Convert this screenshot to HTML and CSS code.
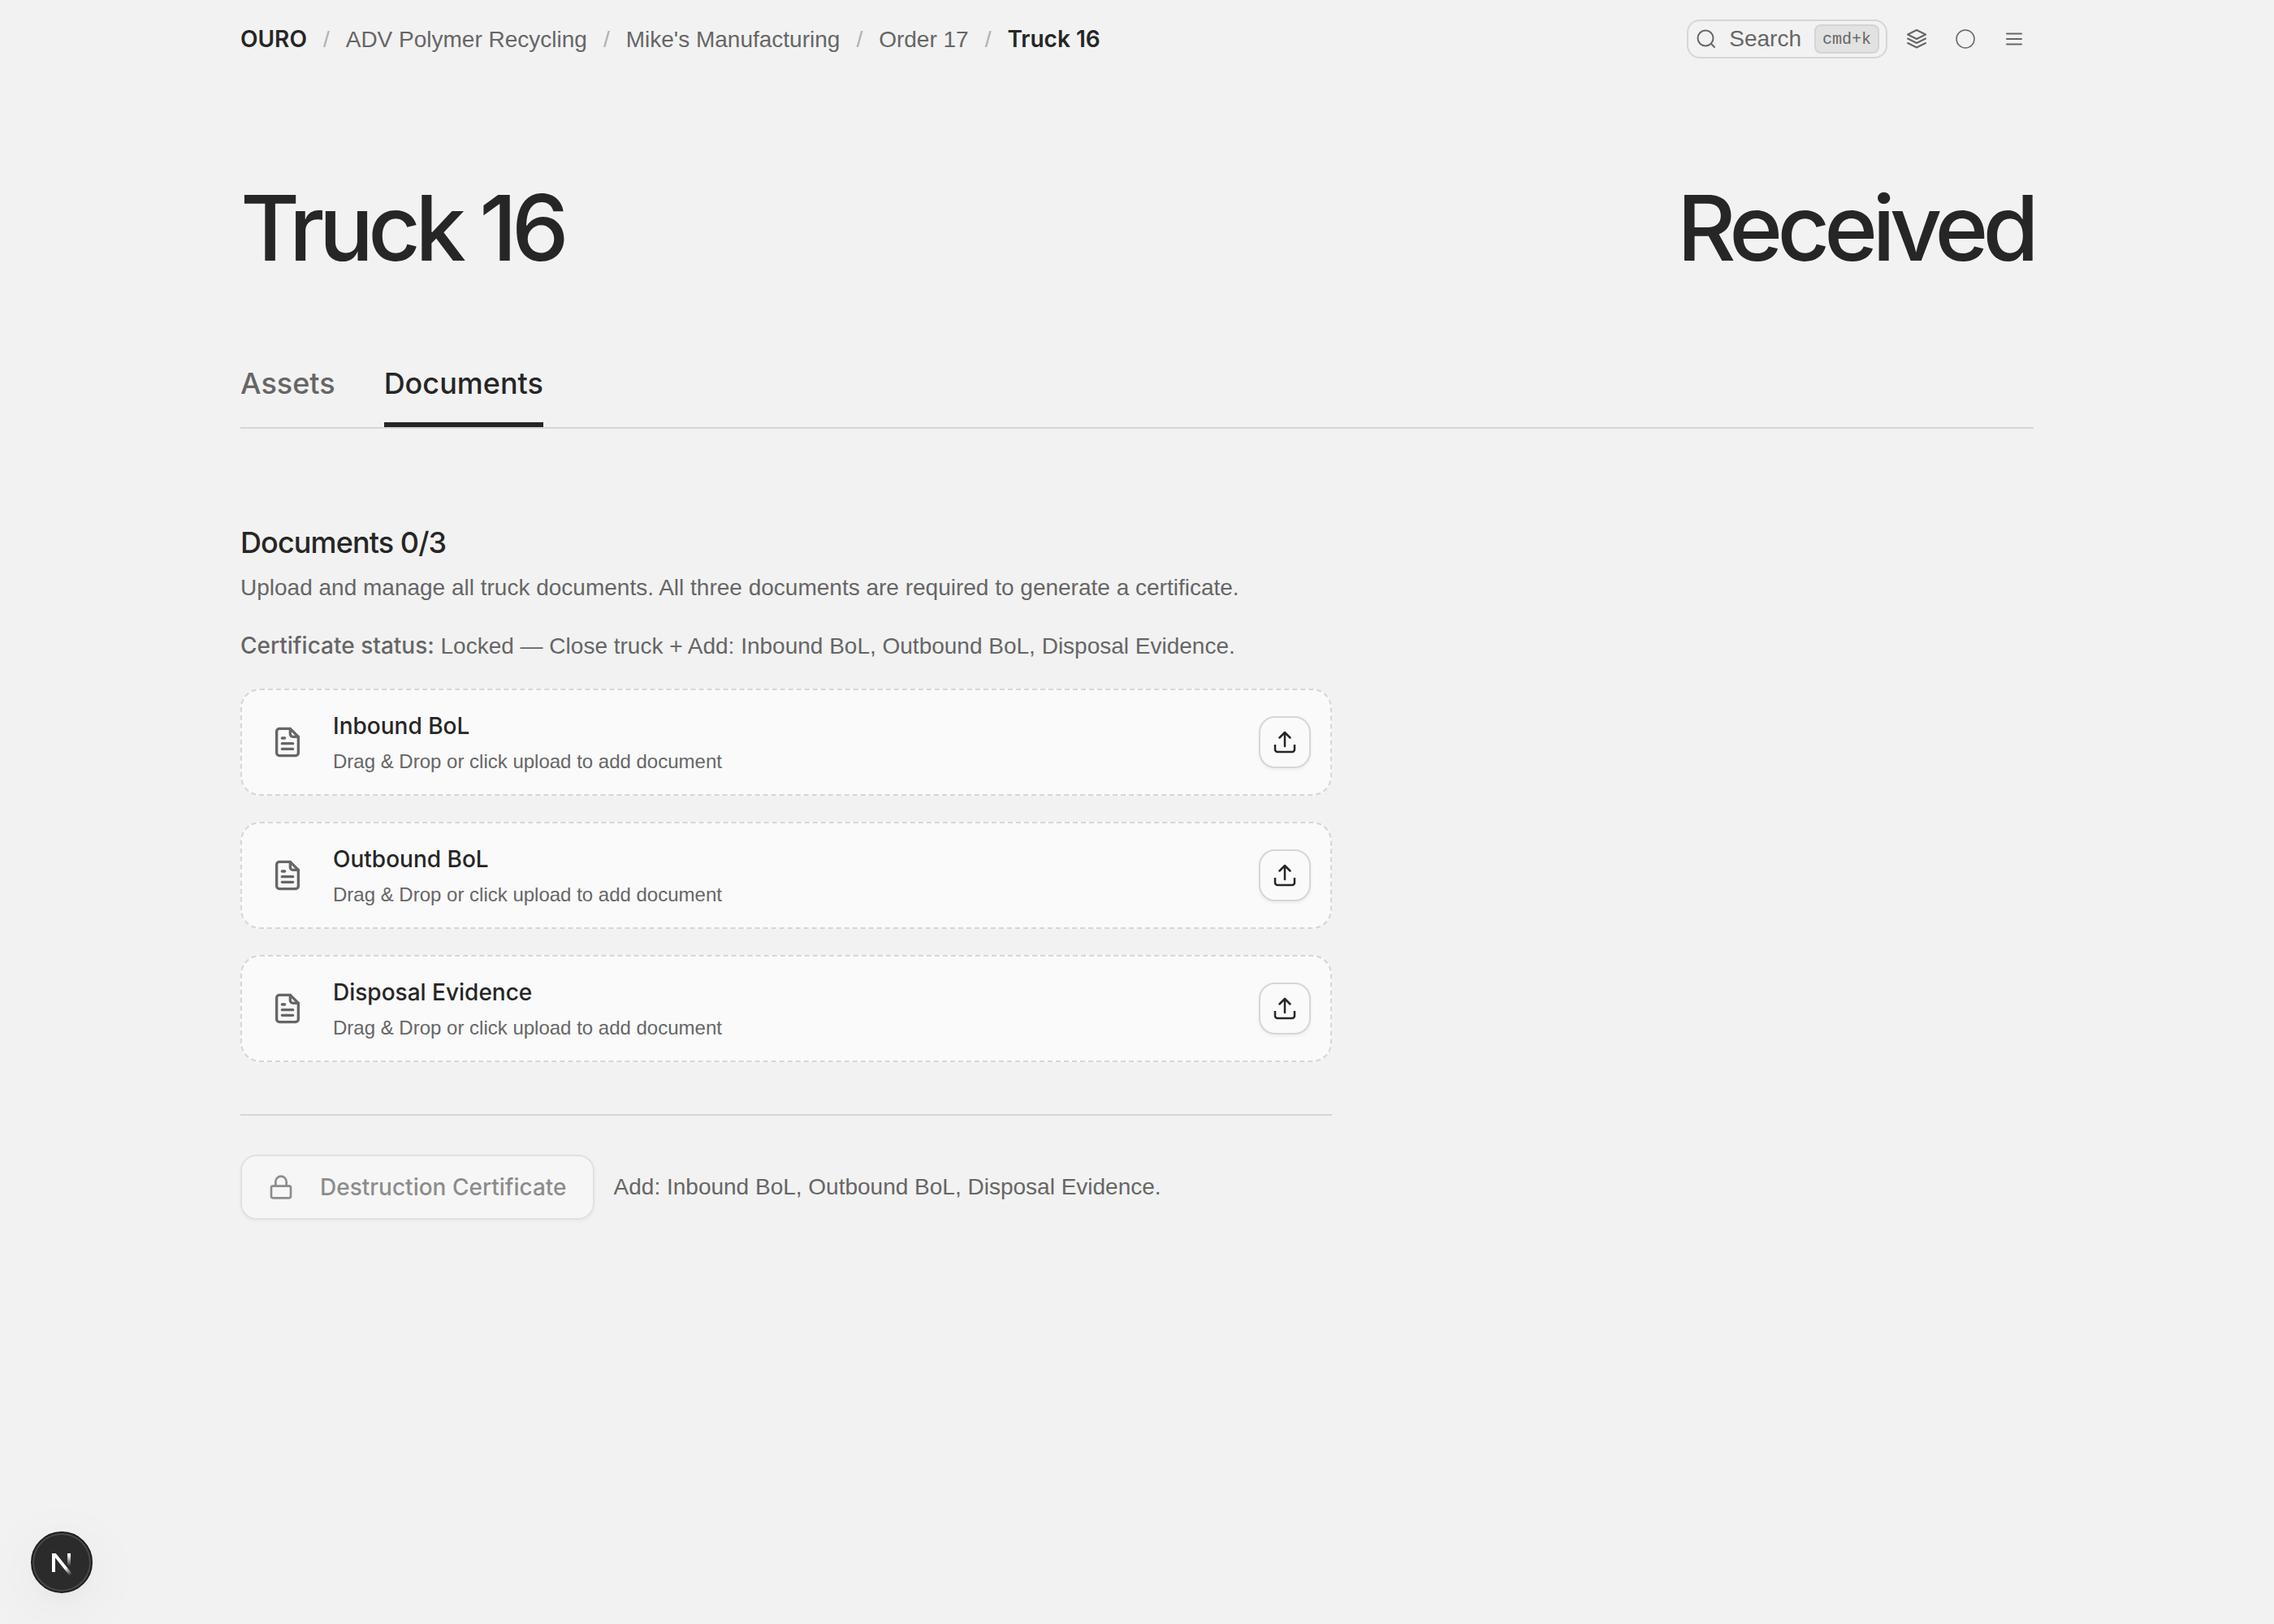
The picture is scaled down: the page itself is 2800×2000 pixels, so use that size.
FILE: index.html
```html
<!DOCTYPE html>
<html lang="en">
<head>
    <meta charset="UTF-8">
    <meta name="viewport" content="width=device-width, initial-scale=1.0">
    <title>Truck 16 - OURO</title>
    <link rel="stylesheet" href="styles.css">
</head>
<body>
    <header class="container topbar">
        <nav class="breadcrumb" aria-label="Breadcrumb">
            <a href="#" class="strong">OURO</a>
            <span class="slash">/</span>
            <a href="#">ADV Polymer Recycling</a>
            <span class="slash">/</span>
            <a href="#">Mike's Manufacturing</a>
            <span class="slash">/</span>
            <a href="#">Order 17</a>
            <span class="slash">/</span>
            <a href="#" class="strong" aria-current="page">Truck 16</a>
        </nav>
        <div class="actions">
            <button type="button" class="search-button">
                <svg class="icon-sm" viewBox="0 0 24 24"><circle cx="11" cy="11" r="9.500"/><path d="m18 18 4 4"/></svg>
                <span>Search</span>
                <kbd>cmd+k</kbd>
            </button>
            <button type="button" class="icon-button" aria-label="Layers">
                <svg class="icon-sm" viewBox="0 0 24 24"><path d="M12 1 23 6.500 12 12 1 6.500Z"/><path d="m1 11.500 11 5.500 11-5.500"/><path d="m1 17 11 5.500L23 17"/></svg>
            </button>
            <button type="button" class="icon-button" aria-label="Theme">
                <svg class="icon-sm" viewBox="0 0 24 24"><circle cx="12" cy="12" r="11" stroke-width="1.500"/></svg>
            </button>
            <button type="button" class="icon-button" aria-label="Menu">
                <svg class="icon-sm" viewBox="0 0 24 24"><path d="M3 5.500h18M3 12h18M3 18.500h18"/></svg>
            </button>
        </div>
    </header>

    <main class="container">
        <div class="page-title">
            <h1>Truck 16</h1>
            <p class="status">Received</p>
        </div>

        <nav class="tabs">
            <a href="#" class="tab">Assets</a>
            <a href="#" class="tab active">Documents</a>
        </nav>

        <section class="documents">
            <h2>Documents 0/3</h2>
            <p class="description">Upload and manage all truck documents. All three documents are required to generate a certificate.</p>
            <p class="certificate-status"><strong>Certificate status:</strong> Locked — Close truck + Add: Inbound BoL, Outbound BoL, Disposal Evidence.</p>

            <div class="document-list">
                <div class="document-card">
                    <svg class="file-icon" viewBox="0 0 24 24"><path d="M14 2H6a2 2 0 0 0-2 2v16a2 2 0 0 0 2 2h12a2 2 0 0 0 2-2V8Z"/><path d="M14 2v4a2 2 0 0 0 2 2h4M8 9h2M8 13h8M8 17h8"/></svg>
                    <div class="document-text">
                        <h3>Inbound BoL</h3>
                        <p>Drag &amp; Drop or click upload to add document</p>
                    </div>
                    <button type="button" class="upload-button" aria-label="Upload Inbound BoL">
                        <svg viewBox="0 0 32 32"><path d="M16 21V4M9.500 10.500 16 4l6.500 6.500"/><path d="M4 19v6a3 3 0 0 0 3 3h18a3 3 0 0 0 3-3v-6" stroke-linecap="butt"/></svg>
                    </button>
                </div>
                <div class="document-card">
                    <svg class="file-icon" viewBox="0 0 24 24"><path d="M14 2H6a2 2 0 0 0-2 2v16a2 2 0 0 0 2 2h12a2 2 0 0 0 2-2V8Z"/><path d="M14 2v4a2 2 0 0 0 2 2h4M8 9h2M8 13h8M8 17h8"/></svg>
                    <div class="document-text">
                        <h3>Outbound BoL</h3>
                        <p>Drag &amp; Drop or click upload to add document</p>
                    </div>
                    <button type="button" class="upload-button" aria-label="Upload Outbound BoL">
                        <svg viewBox="0 0 32 32"><path d="M16 21V4M9.500 10.500 16 4l6.500 6.500"/><path d="M4 19v6a3 3 0 0 0 3 3h18a3 3 0 0 0 3-3v-6" stroke-linecap="butt"/></svg>
                    </button>
                </div>
                <div class="document-card">
                    <svg class="file-icon" viewBox="0 0 24 24"><path d="M14 2H6a2 2 0 0 0-2 2v16a2 2 0 0 0 2 2h12a2 2 0 0 0 2-2V8Z"/><path d="M14 2v4a2 2 0 0 0 2 2h4M8 9h2M8 13h8M8 17h8"/></svg>
                    <div class="document-text">
                        <h3>Disposal Evidence</h3>
                        <p>Drag &amp; Drop or click upload to add document</p>
                    </div>
                    <button type="button" class="upload-button" aria-label="Upload Disposal Evidence">
                        <svg viewBox="0 0 32 32"><path d="M16 21V4M9.500 10.500 16 4l6.500 6.500"/><path d="M4 19v6a3 3 0 0 0 3 3h18a3 3 0 0 0 3-3v-6" stroke-linecap="butt"/></svg>
                    </button>
                </div>
            </div>

            <div class="certificate-row">
                <button type="button" class="certificate-button" disabled>
                    <svg viewBox="0 0 24 24"><rect x="3" y="11" width="18" height="11" rx="1.500"/><path d="M7 11V7a5 5 0 0 1 10 0v4"/></svg>
                    Destruction Certificate
                </button>
                <p>Add: Inbound BoL, Outbound BoL, Disposal Evidence.</p>
            </div>
        </section>
    </main>

    <button type="button" class="dev-badge" aria-label="Open developer tools">
        <svg viewBox="0 0 40 40">
            <defs>
                <linearGradient id="fade-diagonal" gradientUnits="userSpaceOnUse" x1="24" y1="27" x2="31" y2="36">
                    <stop offset="0" stop-color="#fff"/>
                    <stop offset="1" stop-color="#fff" stop-opacity="0"/>
                </linearGradient>
                <linearGradient id="fade-stem" gradientUnits="userSpaceOnUse" x1="0" y1="11" x2="0" y2="25">
                    <stop offset="0" stop-color="#fff"/>
                    <stop offset="1" stop-color="#fff" stop-opacity="0"/>
                </linearGradient>
            </defs>
            <path d="M10 32V9" stroke="#fff"/>
            <path d="M11 10 31 35" stroke="url(#fade-diagonal)"/>
            <rect x="27" y="9" width="4" height="16" fill="url(#fade-stem)"/>
        </svg>
    </button>
</body>
</html>
```
FILE: styles.css
```css
* {
    box-sizing: border-box;
}

body {
    margin: 0;
    min-height: 100vh;
    background-color: #f2f2f2;
    color: #262626;
    font-family: 'Liberation Sans', Arial, sans-serif;
    font-size: 28px;
    line-height: 40px;
}

h1, h2, h3, p {
    margin: 0;
    font-weight: 500;
}

/* medium weights are set in Inter */
h1, h2, h3, strong, .strong, .status, .tab, .certificate-button {
    font-family: 'Inter', sans-serif;
}

p {
    font-weight: 400;
}

a {
    color: inherit;
    text-decoration: none;
}

button {
    font: inherit;
    color: inherit;
    cursor: pointer;
}

svg {
    display: block;
    flex: none;
    fill: none;
    stroke: currentColor;
    stroke-width: 2;
    stroke-linecap: round;
    stroke-linejoin: round;
}

.container {
    width: 100%;
    max-width: 2304px;
    margin: 0 auto;
    padding: 0 48px;
}

/* Top bar */
.topbar {
    display: flex;
    justify-content: space-between;
    align-items: center;
    height: 96px;
    color: #666666;
}

.breadcrumb {
    display: flex;
    align-items: baseline;
    gap: 20px;
}

.breadcrumb .strong {
    color: #262626;
    font-weight: 600;
}

.slash {
    color: #b0b0b0;
}

.actions {
    display: flex;
    align-items: center;
    gap: 12px;
}

.search-button {
    display: flex;
    align-items: center;
    gap: 16px;
    height: 48px;
    padding: 0 8px 0 10px;
    border: 2px solid #d6d6d6;
    border-radius: 16px;
    background: transparent;
}

.search-button kbd {
    height: 36px;
    padding: 0 8px;
    border: 2px solid #d4d4d4;
    border-radius: 8px;
    background-color: #e2e2e2;
    font-family: 'Liberation Mono', monospace;
    font-size: 20px;
    line-height: 34px;
}

.icon-sm {
    width: 24px;
    height: 24px;
}

.icon-button {
    display: flex;
    justify-content: center;
    align-items: center;
    width: 48px;
    height: 48px;
    padding: 0;
    border: none;
    background: transparent;
}

/* Page heading */
.page-title {
    display: flex;
    justify-content: space-between;
    padding-top: 128px;
}

.page-title h1,
.page-title .status {
    font-size: 112px;
    font-weight: 500;
    line-height: 112px;
    letter-spacing: -0.06em;
}

.tabs {
    display: flex;
    gap: 60px;
    margin-top: 112px;
    border-bottom: 2px solid #d6d6d6;
}

.tab {
    padding-bottom: 24px;
    border-bottom: 6px solid transparent;
    color: #666666;
    font-size: 36px;
    font-weight: 500;
    line-height: 48px;
}

.tab.active {
    border-bottom-color: #262626;
    color: #262626;
}

/* Documents */
.documents {
    max-width: 1344px;
    padding-top: 116px;
    color: #666666;
}

.documents h2 {
    color: #262626;
    font-size: 36px;
    line-height: 48px;
    letter-spacing: -0.025em;
}

.description {
    margin-top: 12px;
}

.certificate-status {
    margin-top: 32px;
}

.certificate-status strong {
    font-weight: 500;
    line-height: 32px;
}

.document-list {
    display: flex;
    flex-direction: column;
    gap: 32px;
    margin-top: 32px;
}

.document-card {
    display: flex;
    align-items: center;
    gap: 36px;
    height: 132px;
    padding: 0 24px 0 36px;
    border: 2px dashed #d6d6d6;
    border-radius: 24px;
    background-color: #fafafa;
}

.file-icon {
    width: 40px;
    height: 40px;
}

.document-text {
    flex: 1;
}

.document-text h3 {
    color: #262626;
    font-size: 28px;
    line-height: 48px;
}

.document-text p {
    font-size: 24px;
}

.upload-button {
    display: flex;
    justify-content: center;
    align-items: center;
    width: 64px;
    height: 64px;
    padding: 0;
    border: 2px solid #d6d6d6;
    border-radius: 20px;
    background-color: #fafafa;
    color: #262626;
    box-shadow: 0 2px 4px rgba(0, 0, 0, 0.06);
}

.upload-button svg {
    width: 32px;
    height: 32px;
    stroke-width: 2.5;
}

.certificate-row {
    display: flex;
    align-items: center;
    gap: 24px;
    margin-top: 64px;
    padding-top: 48px;
    border-top: 2px solid #d6d6d6;
}

.certificate-button {
    display: flex;
    align-items: center;
    gap: 32px;
    height: 80px;
    padding: 0 32px;
    border: 2px solid #d6d6d6;
    border-radius: 20px;
    background-color: #fafafa;
    color: #4a4a4a;
    font-weight: 500;
    box-shadow: 0 2px 4px rgba(0, 0, 0, 0.06);
    opacity: 0.6;
    cursor: default;
}

.certificate-button svg {
    width: 32px;
    height: 32px;
}

/* Floating badge */
.dev-badge {
    position: fixed;
    left: 38px;
    bottom: 38px;
    display: flex;
    justify-content: center;
    align-items: center;
    width: 76px;
    height: 76px;
    padding: 0;
    border: 2px solid #1f1f1f;
    border-radius: 50%;
    background-color: #2b2b2b;
    box-shadow: inset 0 0 0 2px #4a4a4a, 0 16px 32px -8px rgba(0, 0, 0, 0.04), 0 16px 80px rgba(0, 0, 0, 0.06);
}

.dev-badge svg {
    width: 40px;
    height: 40px;
    stroke-width: 4;
    stroke-linecap: butt;
}

.dev-badge rect {
    stroke: none;
}

@media screen and (max-width: 1300px) {
    .topbar,
    .breadcrumb,
    .page-title,
    .certificate-row {
        flex-wrap: wrap;
        height: auto;
    }
}
```
